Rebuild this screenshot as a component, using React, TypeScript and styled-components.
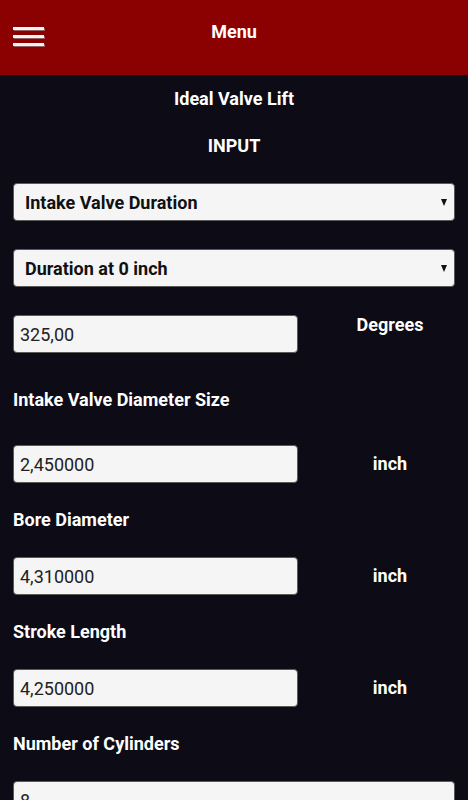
import React from 'react';
import styled, { createGlobalStyle } from 'styled-components';

const GlobalStyle = createGlobalStyle`
  html, body {
    margin: 0;
    padding: 0;
    background: #0c0b16;
  }
  body {
    font-family: Roboto, "Noto Sans", Arial, sans-serif;
    color: #ffffff;
  }
`;

const fields = [
  { label: 'Intake Valve Diameter Size', value: '2,450000', unit: 'inch', first: true },
  { label: 'Bore Diameter', value: '4,310000', unit: 'inch' },
  { label: 'Stroke Length', value: '4,250000', unit: 'inch' },
];

const App: React.FC = () => {
  return (
    <Page>
      <GlobalStyle />
      <Header>
        <Burger aria-label="menu">
          <Bar />
          <Bar />
          <Bar />
        </Burger>
        <HeaderTitle>Menu</HeaderTitle>
      </Header>

      <Content>
        <Title>Ideal Valve Lift</Title>
        <Section>INPUT</Section>

        <SelectWrap>
          <Select defaultValue="intake">
            <option value="intake">Intake Valve Duration</option>
            <option value="exhaust">Exhaust Valve Duration</option>
          </Select>
          <Arrow />
        </SelectWrap>

        <SelectWrap $spaced>
          <Select defaultValue="0">
            <option value="0">Duration at 0 inch</option>
            <option value="050">Duration at 0.050 inch</option>
          </Select>
          <Arrow />
        </SelectWrap>

        <Row $spaced>
          <Field defaultValue="325,00" />
          <Unit $top>Degrees</Unit>
        </Row>

        {fields.map((f) => (
          <Group key={f.label} $first={f.first}>
            <Label $first={f.first}>{f.label}</Label>
            <Row>
              <Field defaultValue={f.value} />
              <Unit>{f.unit}</Unit>
            </Row>
          </Group>
        ))}

        <Group>
          <Label>Number of Cylinders</Label>
          <Field $wide defaultValue="8" />
        </Group>
      </Content>
    </Page>
  );
};

export default App;

const Page = styled.div`
  width: 468px;
  height: 800px;
  overflow: hidden;
  background: #0c0b16;
`;

const Header = styled.header`
  position: relative;
  height: 75px;
  background: #8b0000;
  display: flex;
  justify-content: center;
  align-items: flex-start;
  padding-top: 21px;
  box-sizing: border-box;
`;

const Burger = styled.div`
  position: absolute;
  left: 13px;
  top: 27px;
  width: 31px;
  display: flex;
  flex-direction: column;
  gap: 5px;
`;

const Bar = styled.span`
  display: block;
  height: 3px;
  background: #f4f4f4;
  box-shadow: 1px 1px 0 rgba(160, 160, 160, 0.6);
`;

const HeaderTitle = styled.div`
  font-size: 18px;
  font-weight: 700;
  line-height: 22px;
`;

const Content = styled.main`
  padding: 14px 13px 0;
`;

const Title = styled.div`
  text-align: center;
  font-size: 18px;
  font-weight: 700;
  line-height: 20px;
`;

const Section = styled(Title)`
  margin-top: 27px;
  margin-bottom: 27px;
`;

const SelectWrap = styled.div<{ $spaced?: boolean }>`
  position: relative;
  margin-top: ${(p) => (p.$spaced ? '28px' : '0')};
`;

const Select = styled.select`
  appearance: none;
  -webkit-appearance: none;
  display: block;
  width: 100%;
  height: 38px;
  box-sizing: border-box;
  background: #f5f5f5;
  border: 1px solid #5a5a5a;
  border-radius: 4px;
  padding: 0 30px 0 11px;
  font-family: Roboto, Arial, sans-serif;
  font-size: 18px;
  font-weight: 700;
  color: #111;
  outline: none;
`;

const Arrow = styled.span`
  position: absolute;
  right: 8px;
  top: 16px;
  width: 0;
  height: 0;
  border-left: 3.5px solid transparent;
  border-right: 3.5px solid transparent;
  border-top: 7px solid #111;
  pointer-events: none;
`;

const Row = styled.div<{ $spaced?: boolean }>`
  display: grid;
  grid-template-columns: 285px 1fr;
  column-gap: 27px;
  align-items: center;
  margin-top: ${(p) => (p.$spaced ? '28px' : '0')};
`;

const Field = styled.input<{ $wide?: boolean }>`
  display: block;
  width: ${(p) => (p.$wide ? '100%' : '285px')};
  height: 38px;
  box-sizing: border-box;
  background: #f5f5f5;
  border: 1px solid #5a5a5a;
  border-radius: 4px;
  padding: 0 6px;
  font-family: Roboto, Arial, sans-serif;
  font-size: 18px;
  color: #222;
  outline: none;
`;

const Unit = styled.div<{ $top?: boolean }>`
  text-align: center;
  font-size: 18px;
  font-weight: 700;
  line-height: 20px;
  align-self: ${(p) => (p.$top ? 'start' : 'center')};
`;

const Group = styled.div<{ $first?: boolean }>`
  margin-top: ${(p) => (p.$first ? '37px' : '27px')};
`;

const Label = styled.div<{ $first?: boolean }>`
  font-size: 18px;
  font-weight: 700;
  line-height: 20px;
  margin-bottom: ${(p) => (p.$first ? '35px' : '27px')};
`;
